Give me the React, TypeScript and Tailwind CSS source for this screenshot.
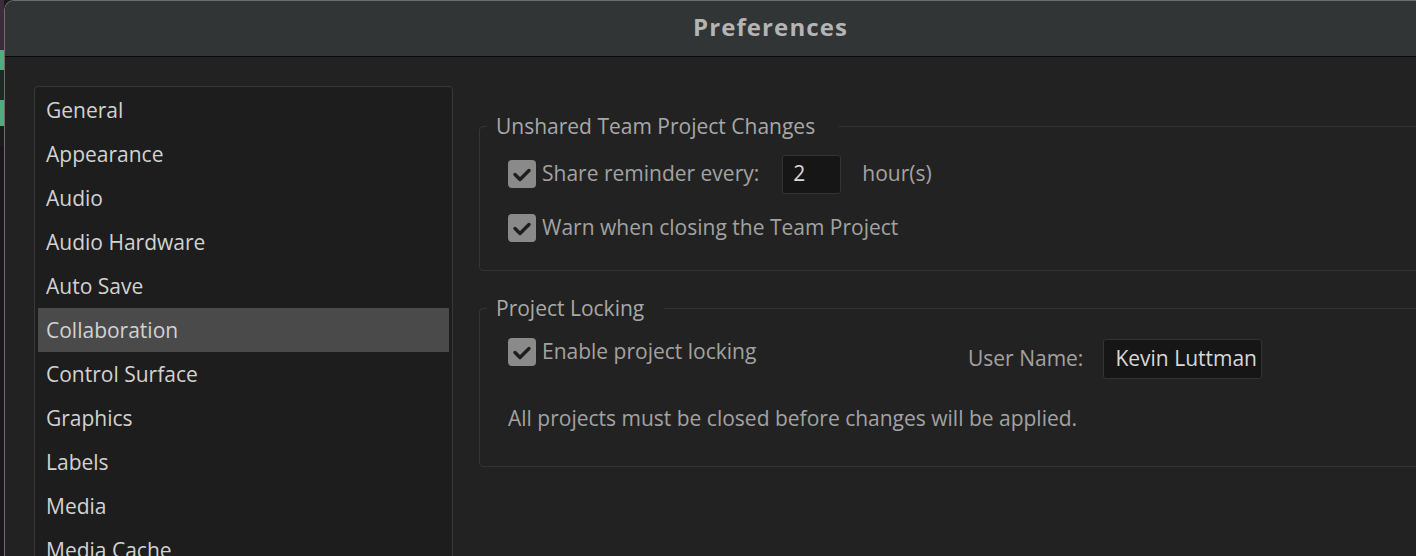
import React from "react";

const items = [
  "General",
  "Appearance",
  "Audio",
  "Audio Hardware",
  "Auto Save",
  "Collaboration",
  "Control Surface",
  "Graphics",
  "Labels",
  "Media",
  "Media Cache",
];

function Check() {
  return (
    <div className="w-[28px] h-[28px] rounded-[4px] bg-[#8a8a8a] flex items-center justify-center shrink-0">
      <svg width="28" height="28" viewBox="0 0 28 28">
        <polyline
          points="7,14.5 12,19.5 21,10.5"
          fill="none"
          stroke="#1e1e1e"
          strokeWidth="3.4"
          strokeLinecap="round"
          strokeLinejoin="round"
        />
      </svg>
    </div>
  );
}

export default function App() {
  return (
    <div
      className="w-[1416px] h-[556px] overflow-hidden flex bg-[#1a1a1a]"
      style={{ fontFamily: '"Open Sans", "Noto Sans", sans-serif' }}
    >
      <div className="w-[4px] shrink-0 flex flex-col">
        <div className="h-[50px] bg-[#3b2c3c]" />
        <div className="h-[20px] bg-[#4fae80]" />
        <div className="h-[30px] bg-[#1d2a24]" />
        <div className="h-[26px] bg-[#4fae80]" />
        <div className="h-[20px] bg-[#1c1c1c]" />
        <div className="flex-1 bg-[#1a161c]" />
      </div>
      <div className="w-[1532px] shrink-0 flex flex-col rounded-tl-[10px] overflow-hidden border-t border-l border-[#6e6e6e] bg-[#222222]">
        <div className="h-[56px] shrink-0 bg-[#313536] flex items-center justify-center border-b border-[#0a0a0a] pb-[4px]">
          <span className="text-[24px] font-bold text-[#b4b4b4] tracking-[1.1px]">Preferences</span>
        </div>
        <div className="flex flex-1 pt-[29px] pl-[29px] gap-[26px]">
          <div className="w-[419px] shrink-0 border border-[#383838] rounded-[4px] bg-[#1d1d1d] pt-[1px] px-[3px] h-[520px]">
            {items.map((it) => (
              <div
                key={it}
                className={`h-[44px] flex items-center pl-[8px] pt-[1px] text-[21px] text-[#d2d2d2] ${
                  it === "Collaboration" ? "bg-[#4a4a4a]" : ""
                }`}
              >
                {it}
              </div>
            ))}
          </div>
          <div className="flex-1 flex flex-col text-[21px] text-[#a2a2a2]">
            <fieldset className="border border-[#353535] rounded-[4px] mt-[26px] pb-[28px]">
              <legend className="ml-[7px] pl-[9px] pr-[24px] leading-[28px] text-[#a8a8a8]">
                Unshared Team Project Changes
              </legend>
              <div className="pl-[28px]">
                <div className="flex items-center h-[40px] mt-[14px]">
                  <Check />
                  <span className="ml-[6px]">Share reminder every:</span>
                  <div className="ml-[23px] w-[59px] h-[39px] bg-[#161616] border border-[#333333] rounded-[3px] flex items-center pl-[10px] text-[#d8d8d8]">
                    2
                  </div>
                  <span className="ml-[21px]">hour(s)</span>
                </div>
                <div className="flex items-center h-[28px] mt-[20px]">
                  <Check />
                  <span className="ml-[6px]">Warn when closing the Team Project</span>
                </div>
              </div>
            </fieldset>
            <fieldset className="border border-[#353535] rounded-[4px] mt-[23px] pb-[34px]">
              <legend className="ml-[7px] pl-[9px] pr-[20px] leading-[28px] text-[#a8a8a8]">
                Project Locking
              </legend>
              <div className="pl-[28px]">
                <div className="flex items-start mt-[16px]">
                  <div className="w-[460px] flex items-center h-[28px]">
                    <Check />
                    <span className="ml-[6px]">Enable project locking</span>
                  </div>
                  <div className="flex items-center h-[40px] mt-[1px]">
                    <span>User Name:</span>
                    <div className="ml-[20px] w-[159px] h-[40px] bg-[#161616] border border-[#333333] rounded-[3px] flex items-center pl-[11px] text-[#d8d8d8] whitespace-nowrap overflow-hidden">
                      Kevin Luttman
                    </div>
                  </div>
                </div>
                <div className="mt-[25px] leading-[28px]">
                  All projects must be closed before changes will be applied.
                </div>
              </div>
            </fieldset>
          </div>
        </div>
      </div>
    </div>
  );
}
